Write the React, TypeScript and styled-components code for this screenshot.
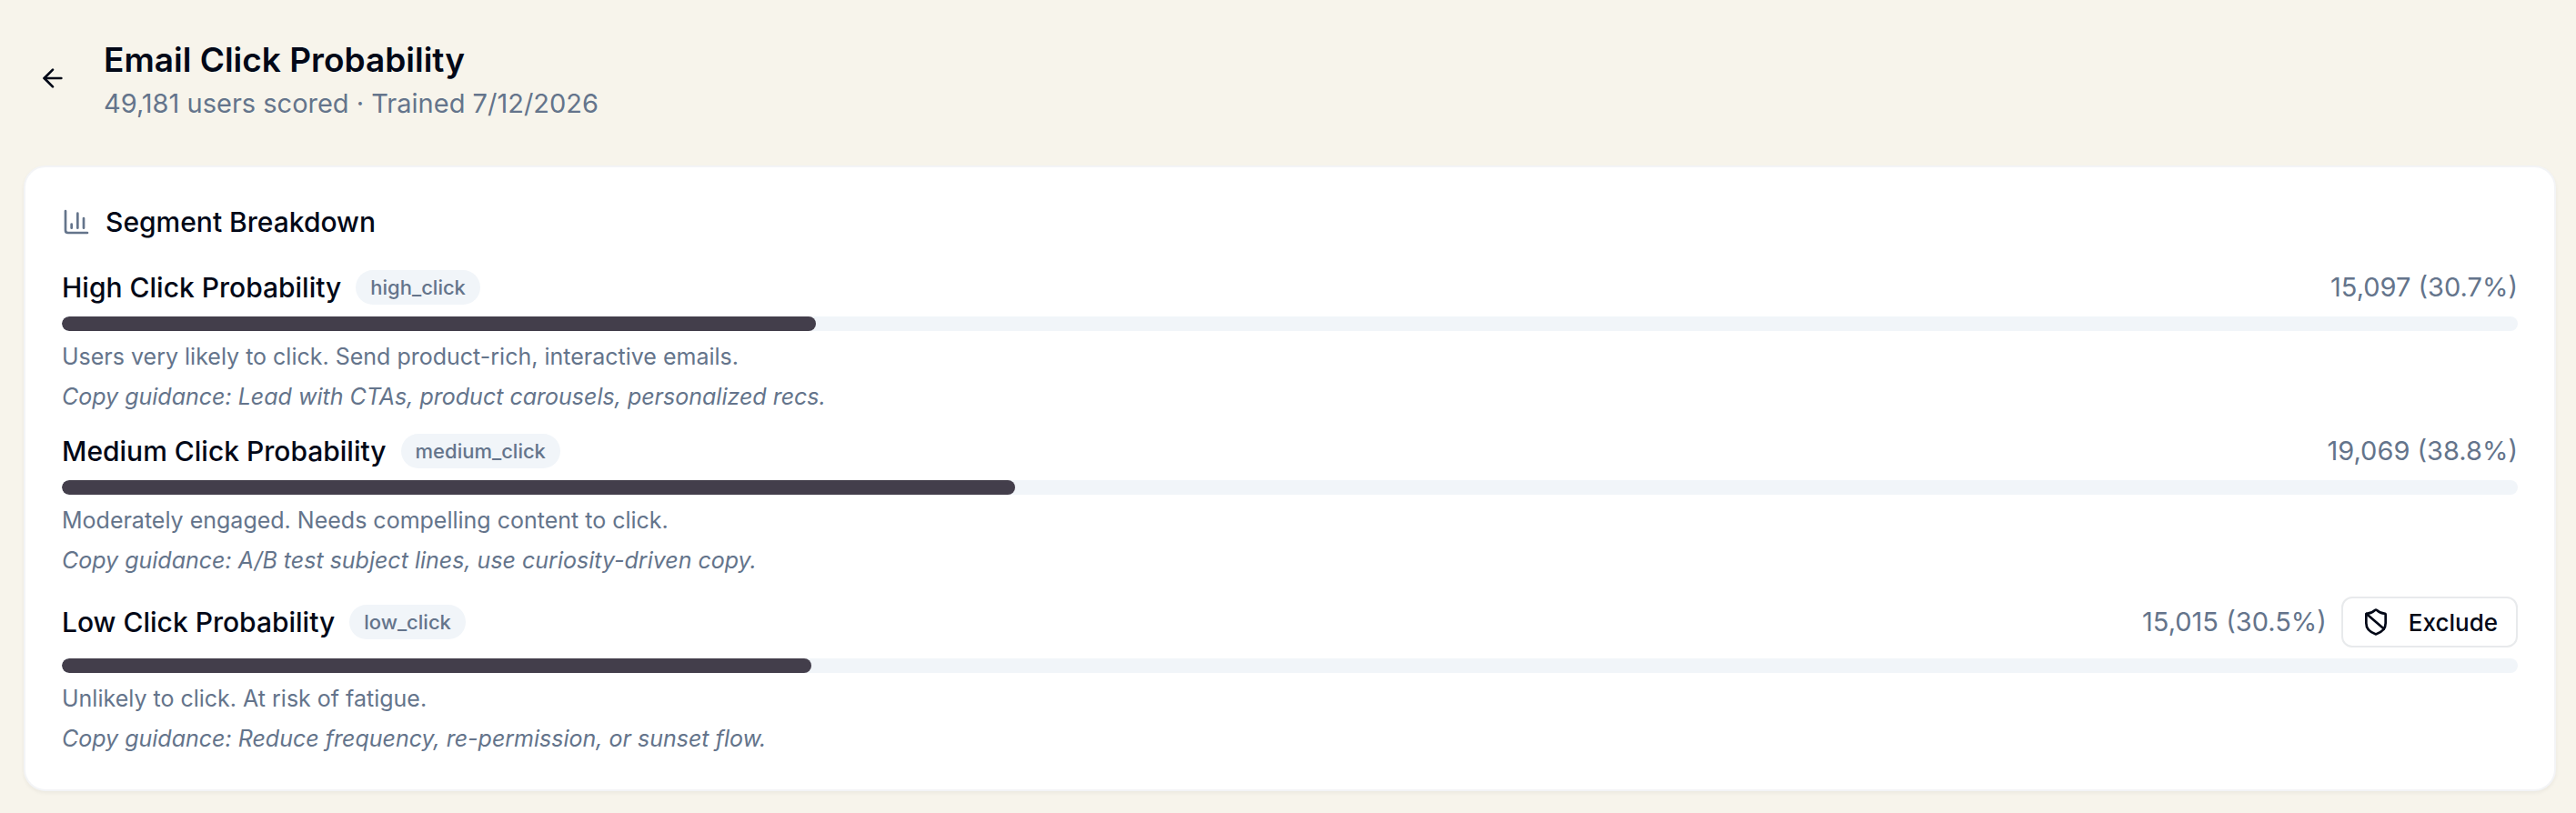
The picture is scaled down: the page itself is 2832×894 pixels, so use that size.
import React from "react";
import styled, { createGlobalStyle } from "styled-components";
import { ArrowLeft, ChartColumn, ShieldBan } from "lucide-react";

const color = {
  page: "#f7f4eb",
  card: "#ffffff",
  cardBorder: "#f3f4f6",
  ink: "#020817",
  muted: "#64748b",
  track: "#f1f5f9",
  fill: "#433e4b",
  outline: "#e8eaec",
};

const GlobalStyle = createGlobalStyle`
  *, *::before, *::after { box-sizing: border-box; }
  body {
    margin: 0;
    background: ${color.page};
    color: ${color.ink};
    font-family: Inter, "Liberation Sans", sans-serif;
    -webkit-font-smoothing: antialiased;
  }
  h1, h2, h3, p, ul { margin: 0; padding: 0; }
`;

const Page = styled.main`
  display: flex;
  flex-direction: column;
  gap: 48px;
  padding: 38px 22px 24px 26px;
`;

const PageHeader = styled.header`
  display: flex;
  align-items: center;
  gap: 24px;
`;

const BackButton = styled.button`
  display: flex;
  align-items: center;
  justify-content: center;
  width: 64px;
  height: 64px;
  padding: 0;
  border: 0;
  border-radius: 12px;
  background: transparent;
  color: inherit;
  cursor: pointer;
`;

const Title = styled.h1`
  font-size: 37px;
  line-height: 56px;
  font-weight: 600;
`;

const Subtitle = styled.p`
  font-size: 29px;
  line-height: 40px;
  color: ${color.muted};
`;

const Card = styled.section`
  display: flex;
  flex-direction: column;
  gap: 32px;
  padding: 40px;
  border: 2px solid ${color.cardBorder};
  border-radius: 24px;
  background: ${color.card};
  box-shadow: 0 2px 4px rgba(0, 0, 0, 0.05);
`;

const CardHeading = styled.div`
  display: flex;
  align-items: center;
  gap: 16px;
  color: ${color.muted};
`;

const CardTitle = styled.h2`
  font-size: 30px;
  line-height: 40px;
  font-weight: 500;
  color: ${color.ink};
`;

const SegmentList = styled.ul`
  display: flex;
  flex-direction: column;
  gap: 24px;
  list-style: none;
`;

const Segment = styled.li`
  display: flex;
  flex-direction: column;
  gap: 12px;
`;

const SegmentHeader = styled.div`
  display: flex;
  align-items: center;
  justify-content: space-between;
`;

const Group = styled.div`
  display: flex;
  align-items: center;
  gap: 16px;
`;

const SegmentName = styled.h3`
  font-size: 30px;
  line-height: 40px;
  font-weight: 500;
`;

const Badge = styled.span`
  padding: 3px 16px;
  border-radius: 20px;
  background: ${color.track};
  color: ${color.muted};
  font-size: 22px;
  line-height: 32px;
  font-weight: 500;
`;

const Count = styled.span`
  font-size: 29px;
  line-height: 40px;
  color: ${color.muted};
`;

const ExcludeButton = styled.button`
  display: flex;
  align-items: center;
  gap: 20px;
  height: 56px;
  padding: 0 20px;
  border: 2px solid ${color.outline};
  border-radius: 12px;
  background: ${color.card};
  color: inherit;
  font: inherit;
  font-size: 26px;
  font-weight: 500;
  cursor: pointer;
`;

const Track = styled.div`
  height: 16px;
  border-radius: 8px;
  background: ${color.track};
  overflow: hidden;
`;

const Fill = styled.div`
  height: 100%;
  border-radius: 8px;
  background: ${color.fill};
`;

const Note = styled.p<{ $italic?: boolean }>`
  font-size: 25px;
  line-height: 32px;
  font-weight: 400;
  font-style: ${({ $italic }) => ($italic ? "italic" : "normal")};
  color: ${color.muted};
`;

interface SegmentData {
  name: string;
  slug: string;
  count: string;
  percent: number;
  description: string;
  guidance: string;
  excludable?: boolean;
}

const segments: SegmentData[] = [
  {
    name: "High Click Probability",
    slug: "high_click",
    count: "15,097",
    percent: 30.7,
    description: "Users very likely to click. Send product-rich, interactive emails.",
    guidance: "Lead with CTAs, product carousels, personalized recs.",
  },
  {
    name: "Medium Click Probability",
    slug: "medium_click",
    count: "19,069",
    percent: 38.8,
    description: "Moderately engaged. Needs compelling content to click.",
    guidance: "A/B test subject lines, use curiosity-driven copy.",
  },
  {
    name: "Low Click Probability",
    slug: "low_click",
    count: "15,015",
    percent: 30.5,
    description: "Unlikely to click. At risk of fatigue.",
    guidance: "Reduce frequency, re-permission, or sunset flow.",
    excludable: true,
  },
];

export default function App() {
  return (
    <>
      <GlobalStyle />
      <Page>
        <PageHeader>
          <BackButton type="button" aria-label="Back">
            <ArrowLeft size={32} />
          </BackButton>
          <div>
            <Title>Email Click Probability</Title>
            <Subtitle>49,181 users scored · Trained 7/12/2026</Subtitle>
          </div>
        </PageHeader>
        <Card>
          <CardHeading>
            <ChartColumn size={32} />
            <CardTitle>Segment Breakdown</CardTitle>
          </CardHeading>
          <SegmentList>
            {segments.map((s) => (
              <Segment key={s.slug}>
                <SegmentHeader>
                  <Group>
                    <SegmentName>{s.name}</SegmentName>
                    <Badge>{s.slug}</Badge>
                  </Group>
                  <Group>
                    <Count>{`${s.count} (${s.percent}%)`}</Count>
                    {s.excludable && (
                      <ExcludeButton type="button">
                        <ShieldBan size={32} />
                        Exclude
                      </ExcludeButton>
                    )}
                  </Group>
                </SegmentHeader>
                <Track
                  role="progressbar"
                  aria-label={s.name}
                  aria-valuemin={0}
                  aria-valuemax={100}
                  aria-valuenow={s.percent}
                >
                  <Fill style={{ width: `${s.percent}%` }} />
                </Track>
                <Note>{s.description}</Note>
                <Note $italic>{`Copy guidance: ${s.guidance}`}</Note>
              </Segment>
            ))}
          </SegmentList>
        </Card>
      </Page>
    </>
  );
}
